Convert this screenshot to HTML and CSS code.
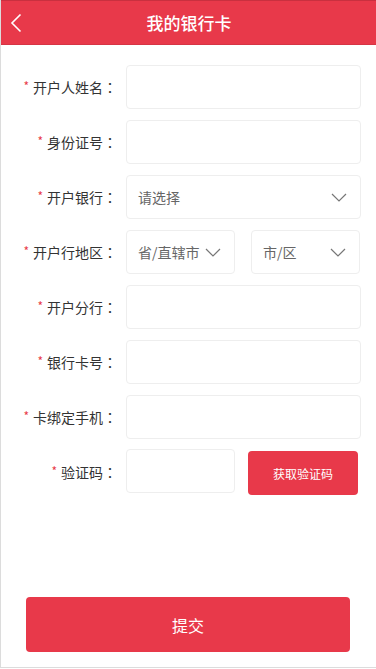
FILE: index.html
```html
<!DOCTYPE html>
<html lang="zh-CN">
<head>
<meta charset="utf-8">
<link rel="stylesheet" href="styles.css">
</head>
<body>
<div class="page">
  <header class="header">
    <span class="back">
      <svg width="12" height="20" viewBox="0 0 12 20"><path d="M10.5 1.5 L2 10 L10.5 18.5" fill="none" stroke="#fff" stroke-width="1.6"/></svg>
    </span>
    <h1 class="title">我的银行卡</h1>
  </header>
  <form class="form">
    <div class="row"><label class="label"><i>*</i>开户人姓名<b lang="zh-TW">：</b></label><div class="field"></div></div>
    <div class="row"><label class="label"><i>*</i>身份证号<b lang="zh-TW">：</b></label><div class="field"></div></div>
    <div class="row"><label class="label"><i>*</i>开户银行<b lang="zh-TW">：</b></label><div class="field select"><span>请选择</span><svg class="chev" width="16" height="9" viewBox="0 0 16 9"><path d="M1 1 L8 8 L15 1" fill="none" stroke="#777" stroke-width="1.2"/></svg></div></div>
    <div class="row"><label class="label"><i>*</i>开户行地区<b lang="zh-TW">：</b></label>
      <div class="pair">
        <div class="field select half"><span>省/直辖市</span><svg class="chev" width="16" height="9" viewBox="0 0 16 9"><path d="M1 1 L8 8 L15 1" fill="none" stroke="#777" stroke-width="1.2"/></svg></div>
        <div class="field select half"><span>市/区</span><svg class="chev" width="16" height="9" viewBox="0 0 16 9"><path d="M1 1 L8 8 L15 1" fill="none" stroke="#777" stroke-width="1.2"/></svg></div>
      </div>
    </div>
    <div class="row"><label class="label"><i>*</i>开户分行<b lang="zh-TW">：</b></label><div class="field"></div></div>
    <div class="row"><label class="label"><i>*</i>银行卡号<b lang="zh-TW">：</b></label><div class="field"></div></div>
    <div class="row"><label class="label"><i>*</i>卡绑定手机<b lang="zh-TW">：</b></label><div class="field"></div></div>
    <div class="row"><label class="label"><i>*</i>验证码<b lang="zh-TW">：</b></label>
      <div class="pair code">
        <div class="field half"></div>
        <button type="button" class="getcode">获取验证码</button>
      </div>
    </div>
  </form>
  <div class="submit-wrap"><button type="button" class="submit">提交</button></div>
</div>
</body>
</html>
```
FILE: styles.css
```css
* { box-sizing: border-box; margin: 0; padding: 0; }
html, body { background: #fff; }
body {
  font-family: "Noto Sans CJK SC", "Noto Sans", sans-serif;
  color: #333;
  width: 376px;
  height: 669px;
  overflow: hidden;
}
.page {
  width: 377px;
  height: 668px;
  border-left: 1px solid #dcdcdc;
  border-bottom: 1px solid #dcdcdc;
  display: flex;
  flex-direction: column;
}
.header {
  height: 45px;
  background: #e8394a;
  border-top: 1px solid #c9303f;
  border-bottom: 1px solid #d63545;
  display: flex;
  align-items: center;
  justify-content: center;
  position: relative;
}
.back {
  position: absolute;
  left: 9px;
  top: 12px;
  display: flex;
}
.title {
  font-size: 17px;
  font-weight: 500;
  color: #fff;
  line-height: 1;
}
.form {
  padding: 20px 16px 0 0;
  display: flex;
  flex-direction: column;
  gap: 11px;
}
.row {
  display: flex;
  align-items: center;
  height: 44px;
}
.label {
  width: 116px;
  flex: none;
  text-align: right;
  font-size: 14px;
  color: #333;
  margin-right: 9px;
  white-space: nowrap;
}
.label b {
  font-weight: 400;
  font-family: "Noto Sans CJK TC", "Noto Sans CJK SC", sans-serif;
}
.label i {
  font-style: normal;
  color: #e8394a;
  font-size: 12px;
  margin-right: 4px;
  position: relative;
  top: -2px;
}
.field {
  flex: 1;
  height: 44px;
  border: 1px solid #eeeeee;
  border-radius: 4px;
  background: #fff;
}
.select {
  display: flex;
  align-items: center;
  justify-content: space-between;
  padding: 0 13px 0 11px;
  font-size: 14px;
  color: #666;
}
.chev { flex: none; }
.pair {
  flex: 1;
  display: flex;
  gap: 16px;
}
.half { flex: none; width: 109px; }
.pair.code { gap: 13px; }
.getcode {
  width: 110px;
  height: 44px;
  border: none;
  border-radius: 4px;
  background: #e8394a;
  color: #fff;
  font-family: inherit;
  font-size: 12px;
  margin-top: 2px;
}
.submit-wrap {
  padding: 103px 0 0 25px;
}
.submit {
  width: 324px;
  height: 55px;
  border: none;
  border-radius: 4px;
  background: #e8394a;
  color: #fff;
  font-family: inherit;
  font-size: 16px;
}
```
